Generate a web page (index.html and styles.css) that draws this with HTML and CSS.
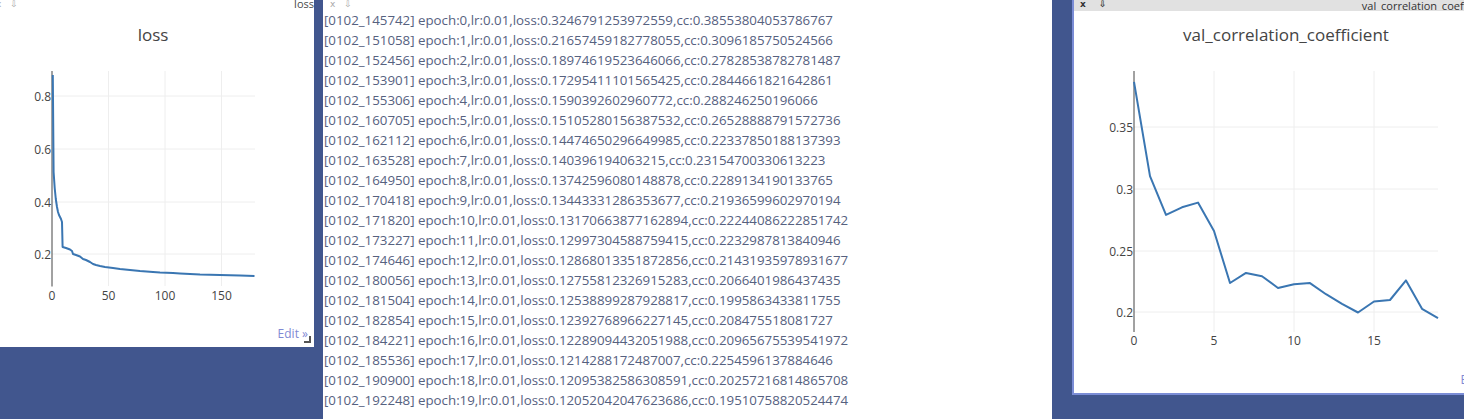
FILE: index.html
```html
<!DOCTYPE html>
<html>
<head>
<meta charset="utf-8">
<title>Training dashboard</title>
<link rel="stylesheet" href="styles.css">
</head>
<body>
<div class="desk">
  <section class="panel panel-loss">
    <div class="phead phead-light">
      <span class="ctl ctl-shift">x &#8681;</span>
      <span class="ptitle">loss</span>
    </div>
    <svg class="chart" width="314" height="336" viewBox="0 11 314 336">
      <g class="grid">
        <line x1="108.5" y1="71" x2="108.5" y2="286"/>
        <line x1="165" y1="71" x2="165" y2="286"/>
        <line x1="221.5" y1="71" x2="221.5" y2="286"/>
        <line x1="52" y1="96" x2="255" y2="96"/>
        <line x1="52" y1="149" x2="255" y2="149"/>
        <line x1="52" y1="202" x2="255" y2="202"/>
        <line x1="52" y1="254" x2="255" y2="254"/>
      </g>
      <line class="axis" x1="52" y1="71" x2="52" y2="286.5"/>
      <polyline class="trace" points="52.8,75 53.6,172 54.7,188 55.8,199 57,207 58,212 59,215 60,217 61,219 62,222 62.6,247 66,248 70,249.5 72,251 73,254 76,255 80,256.5 83,259 86,260 90,262 93,264 96,265 100,266 105,267 113,268 120,269 130,270 140,271 153,272 160,272.5 173,273 180,273.5 200,274.5 220,275 240,275.5 254.5,276"/>
      <g class="ticks ticks-y">
        <text x="51" y="101">0.8</text>
        <text x="51" y="154">0.6</text>
        <text x="51" y="207">0.4</text>
        <text x="51" y="259">0.2</text>
      </g>
      <g class="ticks ticks-x">
        <text x="52" y="300">0</text>
        <text x="108.5" y="300">50</text>
        <text x="165" y="300">100</text>
        <text x="221.5" y="300">150</text>
      </g>
      <text class="ctitle" x="153" y="41">loss</text>
    </svg>
    <a class="edit">Edit &#187;</a>
    <span class="grip"></span>
  </section>

  <section class="panel panel-log">
    <div class="phead phead-light"><span class="ctl">x &#8681;</span></div>
    <div class="log">
      <div class="log-line">[0102_145742] epoch:0,lr:0.01,loss:0.3246791253972559,cc:0.38553804053786767</div>
      <div class="log-line">[0102_151058] epoch:1,lr:0.01,loss:0.21657459182778055,cc:0.3096185750524566</div>
      <div class="log-line">[0102_152456] epoch:2,lr:0.01,loss:0.18974619523646066,cc:0.27828538782781487</div>
      <div class="log-line">[0102_153901] epoch:3,lr:0.01,loss:0.17295411101565425,cc:0.2844661821642861</div>
      <div class="log-line">[0102_155306] epoch:4,lr:0.01,loss:0.1590392602960772,cc:0.288246250196066</div>
      <div class="log-line">[0102_160705] epoch:5,lr:0.01,loss:0.15105280156387532,cc:0.26528888791572736</div>
      <div class="log-line">[0102_162112] epoch:6,lr:0.01,loss:0.14474650296649985,cc:0.22337850188137393</div>
      <div class="log-line">[0102_163528] epoch:7,lr:0.01,loss:0.140396194063215,cc:0.23154700330613223</div>
      <div class="log-line">[0102_164950] epoch:8,lr:0.01,loss:0.13742596080148878,cc:0.2289134190133765</div>
      <div class="log-line">[0102_170418] epoch:9,lr:0.01,loss:0.13443331286353677,cc:0.21936599602970194</div>
      <div class="log-line">[0102_171820] epoch:10,lr:0.01,loss:0.13170663877162894,cc:0.22244086222851742</div>
      <div class="log-line">[0102_173227] epoch:11,lr:0.01,loss:0.12997304588759415,cc:0.2232987813840946</div>
      <div class="log-line">[0102_174646] epoch:12,lr:0.01,loss:0.12868013351872856,cc:0.21431935978931677</div>
      <div class="log-line">[0102_180056] epoch:13,lr:0.01,loss:0.12755812326915283,cc:0.2066401986437435</div>
      <div class="log-line">[0102_181504] epoch:14,lr:0.01,loss:0.12538899287928817,cc:0.1995863433811755</div>
      <div class="log-line">[0102_182854] epoch:15,lr:0.01,loss:0.12392768966227145,cc:0.208475518081727</div>
      <div class="log-line">[0102_184221] epoch:16,lr:0.01,loss:0.12289094432051988,cc:0.20965675539541972</div>
      <div class="log-line">[0102_185536] epoch:17,lr:0.01,loss:0.1214288172487007,cc:0.2254596137884646</div>
      <div class="log-line">[0102_190900] epoch:18,lr:0.01,loss:0.12095382586308591,cc:0.20257216814865708</div>
      <div class="log-line">[0102_192248] epoch:19,lr:0.01,loss:0.12052042047623686,cc:0.19510758820524474</div>
    </div>
  </section>

  <div class="right-area">
    <section class="panel panel-cc">
      <div class="phead phead-grey">
        <span class="ctl ctl-dark">x &#8681;</span>
        <span class="ptitle ptitle-dark">val_correlation_coefficient</span>
      </div>
      <svg class="chart" width="423" height="382" viewBox="1074 11 423 382">
        <g class="grid">
          <line x1="1214" y1="71" x2="1214" y2="332"/>
          <line x1="1294" y1="71" x2="1294" y2="332"/>
          <line x1="1374" y1="71" x2="1374" y2="332"/>
          <line x1="1134" y1="127" x2="1438" y2="127"/>
          <line x1="1134" y1="189" x2="1438" y2="189"/>
          <line x1="1134" y1="251" x2="1438" y2="251"/>
          <line x1="1134" y1="312" x2="1438" y2="312"/>
        </g>
        <line class="axis" x1="1134" y1="71" x2="1134" y2="332"/>
        <polyline class="trace" points="1134,81.9 1150,176.1 1166,214.9 1182,207.3 1198,202.6 1214,231 1230,283 1246,272.9 1262,276.2 1278,288 1294,284.2 1310,283.1 1326,294.2 1342,303.8 1358,312.5 1374,301.5 1390,300 1406,280.4 1422,308.8 1438,318.1"/>
        <g class="ticks ticks-y">
          <text x="1133" y="131.5">0.35</text>
          <text x="1133" y="193.5">0.3</text>
          <text x="1133" y="255.5">0.25</text>
          <text x="1133" y="316.5">0.2</text>
        </g>
        <g class="ticks ticks-x">
          <text x="1134" y="345">0</text>
          <text x="1214" y="345">5</text>
          <text x="1294" y="345">10</text>
          <text x="1374" y="345">15</text>
        </g>
        <text class="ctitle" x="1286" y="41">val_correlation_coefficient</text>
      </svg>
      <a class="edit">Edit &#187;</a>
      <span class="grip"></span>
    </section>
  </div>
</div>
</body>
</html>
```

FILE: styles.css
```css
html, body {
  margin: 0;
  padding: 0;
}

body {
  width: 1464px;
  height: 419px;
  overflow: hidden;
  background: #41568e;
  font-family: "Open Sans", "Noto Sans", "Liberation Sans", sans-serif;
}

.desk {
  display: flex;
  align-items: flex-start;
  gap: 9px;
  height: 419px;
}

.panel {
  position: relative;
  background: #ffffff;
  overflow: hidden;
  flex: none;
}

.panel-loss {
  width: 314px;
  height: 347px;
}

.panel-log {
  width: 729px;
  height: 419px;
}

.right-area {
  flex: none;
  padding-left: 11px;
}

.panel-cc {
  width: 423px;
  height: 393px;
  margin-top: -2px;
  border: 2px solid #7b8dd6;
}

/* panel header strips */
.phead {
  display: flex;
  justify-content: space-between;
  align-items: flex-start;
  height: 11px;
  overflow: hidden;
  font-size: 11px;
  line-height: 11px;
  white-space: nowrap;
}

.phead-grey {
  background: #e1e1e1;
  padding-left: 6px;
}

.panel-log .phead {
  height: 10px;
  padding-left: 7px;
}

.ctl {
  font-size: 9px;
  line-height: 9px;
  color: #a8a8a8;
  letter-spacing: 3px;
  font-family: "DejaVu Sans", "Open Sans", sans-serif;
}

.ctl-shift {
  margin-left: -4px;
}

.ctl-dark {
  color: #333333;
  font-weight: bold;
  letter-spacing: 5px;
}

.ptitle {
  color: #4a4a4a;
  margin-top: -2px;
}

.ptitle-dark {
  color: #333333;
  margin-top: 0;
  padding-right: 2px;
}

/* chart svg */
.chart {
  display: block;
}

.grid line {
  stroke: #eeeeee;
  stroke-width: 1;
}

.axis {
  stroke: #444444;
  stroke-width: 1;
}

.trace {
  fill: none;
  stroke: #3a76b2;
  stroke-width: 2;
  stroke-linejoin: round;
}

.ticks text {
  font-family: "Open Sans", "Liberation Sans", sans-serif;
  font-size: 12px;
  fill: #444444;
}

.ticks-y text {
  text-anchor: end;
}

.ticks-x text {
  text-anchor: middle;
}

.ctitle {
  font-family: "Open Sans", "Liberation Sans", sans-serif;
  font-size: 17px;
  fill: #444444;
  text-anchor: middle;
}

.edit {
  position: absolute;
  right: 6px;
  bottom: 6px;
  font-size: 12px;
  line-height: 14px;
  color: #8089d4;
}

.grip {
  position: absolute;
  right: 3px;
  bottom: 4px;
  width: 5px;
  height: 5px;
  border-right: 2px solid #555555;
  border-bottom: 2px solid #555555;
}

/* log text */
.log {
  padding: 0 0 0 1px;
  color: #56617f;
  font-size: 13.3px;
  line-height: 20px;
  white-space: nowrap;
}
```
